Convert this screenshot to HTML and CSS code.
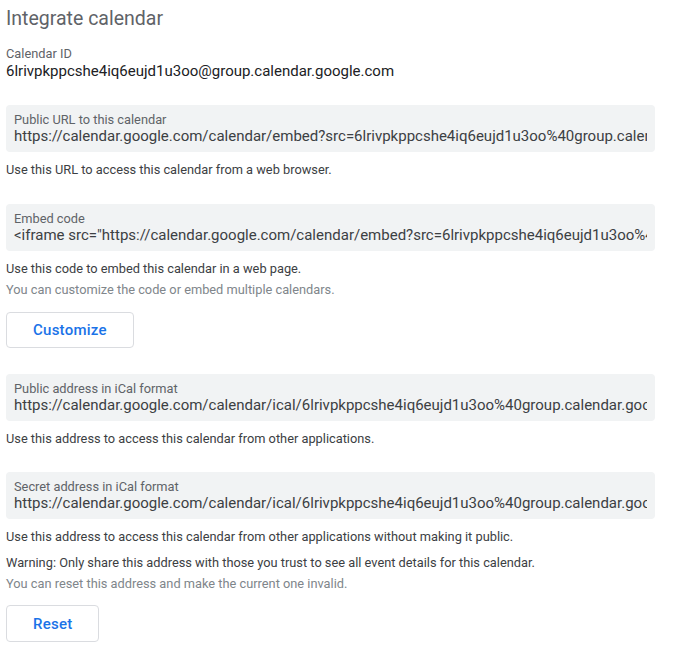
FILE: index.html
```html
<!DOCTYPE html>
<html lang="en">
<head>
<meta charset="utf-8">
<title>Integrate calendar</title>
<link rel="stylesheet" href="styles.css">
</head>
<body>
<main class="page">
  <h1 class="title">Integrate calendar</h1>

  <div class="plain-field">
    <div class="label">Calendar ID</div>
    <div class="value">6lrivpkppcshe4iq6eujd1u3oo@group.calendar.google.com</div>
  </div>

  <section class="section">
    <div class="field">
      <div class="label">Public URL to this calendar</div>
      <div class="value">https://calendar.google.com/calendar/embed?src=6lrivpkppcshe4iq6eujd1u3oo%40group.calendar.google.com&amp;ctz=America%2FLos_Angeles</div>
    </div>
    <p class="help">Use this URL to access this calendar from a web browser.</p>
  </section>

  <section class="section">
    <div class="field">
      <div class="label">Embed code</div>
      <div class="value">&lt;iframe src="https://calendar.google.com/calendar/embed?src=6lrivpkppcshe4iq6eujd1u3oo%40group.calendar.google.com" style="border: 0" width="800" height="600" frameborder="0" scrolling="no"&gt;&lt;/iframe&gt;</div>
    </div>
    <p class="help">Use this code to embed this calendar in a web page.</p>
    <p class="note">You can customize the code or embed multiple calendars.</p>
    <button class="btn" type="button">Customize</button>
  </section>

  <section class="section">
    <div class="field">
      <div class="label">Public address in iCal format</div>
      <div class="value">https://calendar.google.com/calendar/ical/6lrivpkppcshe4iq6eujd1u3oo%40group.calendar.google.com/public/basic.ics</div>
    </div>
    <p class="help">Use this address to access this calendar from other applications.</p>
  </section>

  <section class="section section-tight">
    <div class="field">
      <div class="label">Secret address in iCal format</div>
      <div class="value">https://calendar.google.com/calendar/ical/6lrivpkppcshe4iq6eujd1u3oo%40group.calendar.google.com/private-0000000000000000/basic.ics</div>
    </div>
    <p class="help">Use this address to access this calendar from other applications without making it public.</p>
    <p class="help">Warning: Only share this address with those you trust to see all event details for this calendar.</p>
    <p class="note">You can reset this address and make the current one invalid.</p>
    <button class="btn btn-tall" type="button">Reset</button>
  </section>
</main>
</body>
</html>
```

FILE: styles.css
```css
* {
  box-sizing: border-box;
}

html, body {
  margin: 0;
  padding: 0;
  background: #ffffff;
}

body {
  font-family: Roboto, "Liberation Sans", Arial, sans-serif;
  color: #202124;
}

.page {
  width: 649px;
  margin: 0 0 0 6px;
  padding-top: 5px;
  display: flex;
  flex-direction: column;
  align-items: flex-start;
}

.title {
  margin: 0;
  font-size: 19.5px;
  line-height: 28px;
  font-weight: 400;
  color: #5f6368;
}

.plain-field {
  margin-top: 13px;
  width: 100%;
}

.plain-field .value {
  line-height: 19px;
}

.label {
  font-size: 12.8px;
  line-height: 16px;
  color: #5f6368;
}

.value {
  font-size: 15px;
  line-height: 17px;
  color: #202124;
  white-space: nowrap;
  overflow: hidden;
}

.section {
  width: 100%;
  margin-top: 24px;
  display: flex;
  flex-direction: column;
  align-items: flex-start;
}

.section-tight {
  margin-top: 25px;
}

.plain-field + .section {
  margin-top: 24px;
}

.section + .section {
  margin-top: 26px;
}

.section + .section-tight {
  margin-top: 25px;
}

.field {
  width: 100%;
  background: #f1f3f4;
  border-radius: 4px;
  padding: 7px 8px;
}

.field .value {
  color: #3c4043;
}

.help {
  margin: 10px 0 0;
  font-size: 12.8px;
  line-height: 16px;
  color: #3c4043;
}

.note {
  margin: 5px 0 0;
  font-size: 12.8px;
  line-height: 16px;
  color: #80868b;
}

.btn {
  margin-top: 14px;
  height: 36px;
  padding: 0 26px;
  background: #ffffff;
  border: 1px solid #dadce0;
  border-radius: 4px;
  font-family: Roboto, "Liberation Sans", Arial, sans-serif;
  font-size: 15px;
  font-weight: 500;
  letter-spacing: 0.25px;
  color: #1a73e8;
  cursor: pointer;
}

.btn-tall {
  margin-top: 13px;
  height: 37px;
}
```
